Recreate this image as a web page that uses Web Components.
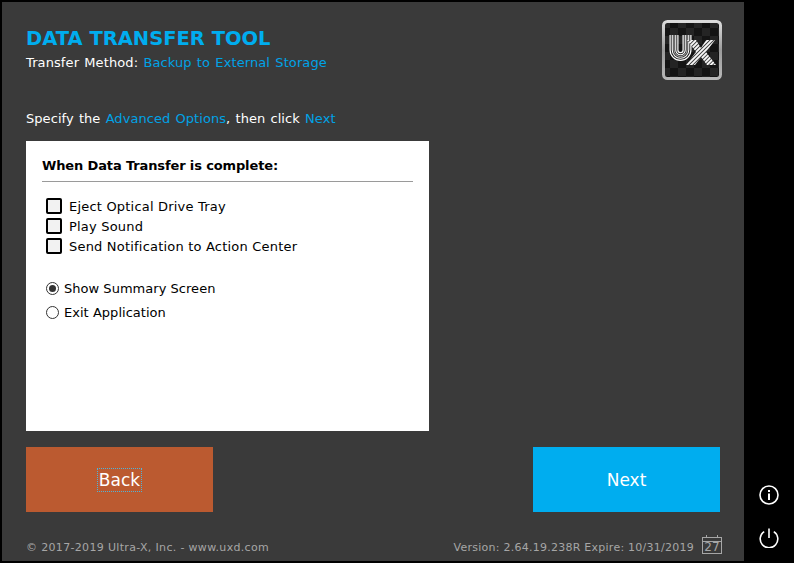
<!DOCTYPE html>
<html>
<head>
<meta charset="utf-8">
<title>Data Transfer Tool</title>
<style>
  html, body { margin: 0; padding: 0; background: #000; height: 100%; overflow: hidden; }
  body { font-family: "DejaVu Sans", Verdana, sans-serif; }
</style>
</head>
<body>
<transfer-app></transfer-app>

<script>
class UxLogo extends HTMLElement {
  connectedCallback() {
    this.attachShadow({ mode: 'open' });
    const u = 'M12 15V30A6.5 6.5 0 0 0 25 30V15';
    this.shadowRoot.innerHTML = `
      <style>
        :host { display: block; width: 60px; height: 60px; }
        svg { display: block; }
      </style>
      <svg width="60" height="60" viewBox="0 0 60 60">
        <defs>
          <pattern id="chk" width="16" height="16" patternUnits="userSpaceOnUse">
            <rect width="16" height="16" fill="#141414"/>
            <rect width="8" height="8" fill="#242424"/>
            <rect x="8" y="8" width="8" height="8" fill="#242424"/>
          </pattern>
          <pattern id="hatch" width="2.8" height="2.8" patternUnits="userSpaceOnUse" patternTransform="rotate(45)">
            <rect width="2.8" height="2.8" fill="#fff"/>
            <rect width="1" height="2.8" fill="#444"/>
          </pattern>
          <linearGradient id="rim" x1="0" y1="0" x2="0" y2="1">
            <stop offset="0" stop-color="#dcdcdc"/>
            <stop offset="0.5" stop-color="#9c9c9c"/>
            <stop offset="1" stop-color="#b8b8b8"/>
          </linearGradient>
        </defs>
        <rect x="1.5" y="1.5" width="57" height="57" rx="4" fill="url(#chk)" stroke="url(#rim)" stroke-width="3"/>
        <g fill="none">
          <path d="${u}" stroke="#fff" stroke-width="9"/>
          <path d="${u}" stroke="#222" stroke-width="6.6"/>
          <path d="${u}" stroke="#fff" stroke-width="4.6"/>
          <path d="${u}" stroke="#222" stroke-width="2.4"/>
          <path d="${u}" stroke="#ddd" stroke-width="0.8"/>
        </g>
        <path d="M25 20H34L39 28L44 20H53L44 32L54 45H45L39 37L33 45H24L34 32Z" fill="url(#hatch)"/>
      </svg>
    `;
  }
}

class OptCheck extends HTMLElement {
  connectedCallback() {
    this.attachShadow({ mode: 'open' });
    this.shadowRoot.innerHTML = `
      <style>
        :host { display: flex; align-items: center; height: 20px; padding-left: 4px; color: #000; font-size: 13px; letter-spacing: 0.2px; }
        .box { width: 12px; height: 12px; border: 2px solid #000; border-radius: 2px; background: #f2f2f2; margin-right: 7px; }
      </style>
      <span class="box"></span><slot></slot>
    `;
  }
}

class OptRadio extends HTMLElement {
  connectedCallback() {
    this.attachShadow({ mode: 'open' });
    const on = this.hasAttribute('checked');
    this.shadowRoot.innerHTML = `
      <style>
        :host { display: flex; align-items: center; height: 24px; padding-left: 4px; color: #000; font-size: 13px; letter-spacing: 0.03px; }
        svg { display: block; margin-right: 5px; }
      </style>
      <svg width="13" height="13" viewBox="0 0 13 13">
        <circle cx="6.5" cy="6.5" r="6" fill="#fff" stroke="#333"/>
        ${on ? '<circle cx="6.5" cy="6.5" r="3.5" fill="#333"/>' : ''}
      </svg>
      <slot></slot>
    `;
  }
}

class OptionsCard extends HTMLElement {
  connectedCallback() {
    this.attachShadow({ mode: 'open' });
    this.shadowRoot.innerHTML = `
      <style>
        :host { display: block; width: 403px; height: 290px; box-sizing: border-box; background: #fff; padding: 16px 16px 0; }
        h2 { margin: 0; font-size: 13px; line-height: 17px; font-weight: bold; color: #000; letter-spacing: -0.13px; padding-bottom: 7px; border-bottom: 1px solid #9a9a9a; }
        .checks { margin-top: 14px; }
        .radios { margin-top: 20px; }
      </style>
      <h2><slot name="heading"></slot></h2>
      <div class="checks"><slot name="checks"></slot></div>
      <div class="radios"><slot name="radios"></slot></div>
    `;
  }
}

class ActionButton extends HTMLElement {
  connectedCallback() {
    this.attachShadow({ mode: 'open' });
    const focus = this.hasAttribute('focused');
    this.shadowRoot.innerHTML = `
      <style>
        :host { display: flex; align-items: center; justify-content: center; width: 187px; height: 65px; color: #fff; font-size: 17px; background: var(--bg); }
        span { padding: 1px; line-height: 20px; border: 1px dotted ${focus ? '#4fb3d9' : 'transparent'}; }
      </style>
      <span><slot></slot></span>
    `;
  }
}

class SideBar extends HTMLElement {
  connectedCallback() {
    this.attachShadow({ mode: 'open' });
    this.shadowRoot.innerHTML = `
      <style>
        :host { display: flex; flex-direction: column; align-items: center; justify-content: flex-end; gap: 23px; width: 50px; padding-bottom: 15px; box-sizing: border-box; }
        svg { display: block; }
      </style>
      <svg width="20" height="20" viewBox="0 0 20 20" fill="none" stroke="#fff" stroke-width="1.6">
        <circle cx="10" cy="10" r="9"/>
        <path d="M10 8.5V15" stroke-width="2"/>
        <path d="M10 5V7" stroke-width="2"/>
      </svg>
      <svg width="20" height="20" viewBox="0 0 20 20" fill="none" stroke="#fff" stroke-width="1.6">
        <path d="M5.2 3.6A8.8 8.8 0 1 0 14.8 3.6"/>
        <path d="M10 0.5V10"/>
      </svg>
    `;
  }
}

class PageFooter extends HTMLElement {
  connectedCallback() {
    this.attachShadow({ mode: 'open' });
    this.shadowRoot.innerHTML = `
      <style>
        :host { display: flex; justify-content: space-between; align-items: flex-end; color: #a6a6a6; font-size: 11px; line-height: 14px; }
        .right { display: flex; align-items: flex-end; gap: 8px; }
        .text { margin-bottom: -1px; }
        .copy { letter-spacing: 0.33px; }
        .ver { letter-spacing: 0.25px; }
        .cal { position: relative; width: 20px; height: 19px; }
        .cal svg { display: block; }
        .cal span { position: absolute; left: 0; right: 0; top: 6px; text-align: center; font-size: 12px; line-height: 13px; }
      </style>
      <span class="text copy">© 2017-2019 Ultra-X, Inc. - www.uxd.com</span>
      <div class="right">
        <span class="text ver">Version: 2.64.19.238R Expire: 10/31/2019</span>
        <div class="cal">
          <svg width="20" height="19" viewBox="0 0 20 19" fill="none" stroke="#a6a6a6">
            <rect x="0.5" y="2.5" width="19" height="16"/>
            <path d="M0 6.5H20M4.5 0V3M15.5 0V3"/>
          </svg>
          <span>27</span>
        </div>
      </div>
    `;
  }
}

class TransferApp extends HTMLElement {
  connectedCallback() {
    this.attachShadow({ mode: 'open' });
    this.shadowRoot.innerHTML = `
      <style>
        :host { display: flex; width: 794px; height: 563px; background: #000; font-family: "DejaVu Sans", Verdana, sans-serif; }
        main { width: 742px; height: 559px; margin: 2px 0 2px 2px; background: #3a3a3a; box-sizing: border-box; padding: 18px 22px 7px 24px; display: flex; flex-direction: column; }
        header { display: flex; justify-content: space-between; align-items: flex-start; height: 60px; }
        h1 { margin: 7px 0 0; font-size: 19.5px; line-height: 24px; font-weight: bold; color: #00adef; }
        .method { margin-top: 4px; font-size: 13px; line-height: 16px; color: #fff; letter-spacing: 0.1px; word-spacing: 1px; }
        .hint { margin: 31px 0 0; font-size: 13px; line-height: 16px; color: #fff; letter-spacing: 0.06px; word-spacing: 1px; }
        b { font-weight: normal; color: #00a2e6; }
        options-card { margin-top: 14px; }
        .actions { display: flex; justify-content: space-between; margin: 16px 2px 0 0; }
        page-footer { margin-top: auto; }
      </style>
      <main>
        <header>
          <div>
            <h1>DATA TRANSFER TOOL</h1>
            <div class="method">Transfer Method: <b>Backup to External Storage</b></div>
          </div>
          <ux-logo></ux-logo>
        </header>
        <p class="hint">Specify the <b>Advanced Options</b>, then click <b>Next</b></p>
        <options-card>
          <span slot="heading">When Data Transfer is complete:</span>
          <opt-check slot="checks">Eject Optical Drive Tray</opt-check>
          <opt-check slot="checks">Play Sound</opt-check>
          <opt-check slot="checks">Send Notification to Action Center</opt-check>
          <opt-radio slot="radios" checked>Show Summary Screen</opt-radio>
          <opt-radio slot="radios">Exit Application</opt-radio>
        </options-card>
        <div class="actions">
          <action-button style="--bg:#bb5a30" focused>Back</action-button>
          <action-button style="--bg:#00adef">Next</action-button>
        </div>
        <page-footer></page-footer>
      </main>
      <side-bar></side-bar>
    `;
  }
}

customElements.define('ux-logo', UxLogo);
customElements.define('opt-check', OptCheck);
customElements.define('opt-radio', OptRadio);
customElements.define('options-card', OptionsCard);
customElements.define('action-button', ActionButton);
customElements.define('side-bar', SideBar);
customElements.define('page-footer', PageFooter);
customElements.define('transfer-app', TransferApp);
</script>
</body>
</html>
